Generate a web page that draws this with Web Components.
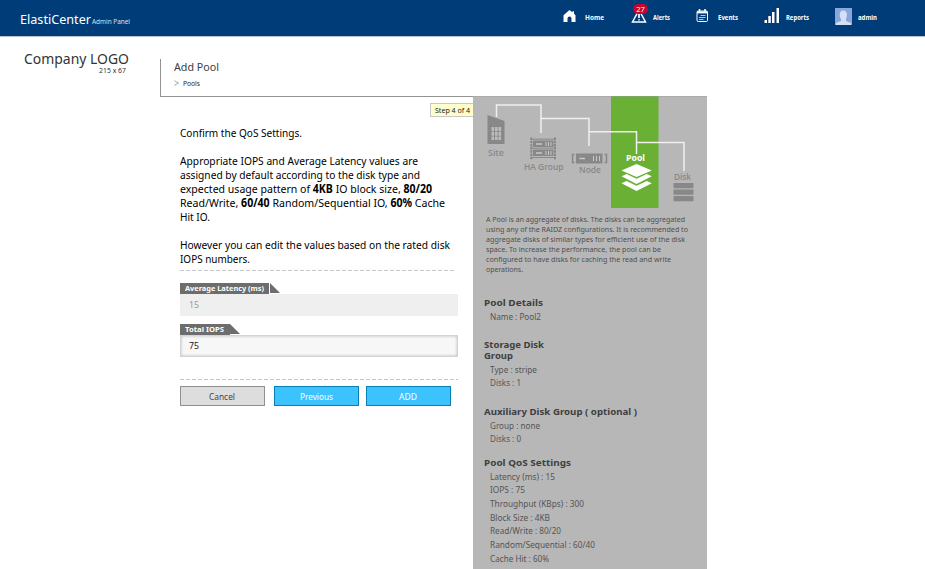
<!DOCTYPE html>
<html lang="en">
<head>
<meta charset="utf-8">
<title>ElastiCenter Admin Panel</title>
<style>
html,body{margin:0;height:569px;overflow:hidden;background:#fff;font-family:"Noto Sans","Open Sans",sans-serif}
</style>
</head>
<body>
<admin-page></admin-page>
<script>
// One line of text, condensed or widened to the width given in "w".
class TextLine extends HTMLElement{
  connectedCallback(){
    if(!this.shadowRoot){
      this.attachShadow({mode:'open'}).innerHTML=`<style>:host{display:block;white-space:nowrap;flex:none}span{display:inline-block;transform-origin:0 50%;vertical-align:top}</style><span><slot></slot></span>`;
    }
    const w=+this.getAttribute('w'), s=this.shadowRoot.querySelector('span');
    this.style.width=w+'px';
    const n=s.offsetWidth?s.getBoundingClientRect().width:0;
    if(n)s.style.transform=`scaleX(${w/n})`;
  }
}

class NavItem extends HTMLElement{
  connectedCallback(){
    this.attachShadow({mode:'open'}).innerHTML=`<style>
    :host{display:flex;align-items:center;height:34px;color:#fff;position:relative;font:bold 7px/10px "Noto Sans",sans-serif}
    ::slotted(svg){display:block;flex:none}
    ::slotted(text-line){margin-top:2px}
    b{position:absolute;left:2px;top:4px;width:15px;height:10px;border-radius:5px;background:#c4062c;font:7.5px/10px "Noto Sans",sans-serif;text-align:center}
    </style><slot></slot>${this.hasAttribute('badge')?`<b>${this.getAttribute('badge')}</b>`:''}`;
  }
}

class TopBar extends HTMLElement{
  connectedCallback(){
    this.attachShadow({mode:'open'}).innerHTML=`<style>
    :host{display:flex;box-sizing:border-box;height:37px;background:#003c78;border-bottom:1px solid #b5bfca;color:#fff;position:relative}
    .brand{display:flex;width:543px;padding-left:20px;box-sizing:border-box}
    .a{font-size:13px;line-height:18px;margin-top:10px}
    .b{font-size:7.2px;line-height:10px;margin:16px 0 0 1px;color:#d8e2ee}
    nav{display:flex;padding-left:20px}
    svg{display:block}
    </style>
    <div class="brand"><text-line class="a" w="71">ElastiCenter</text-line><text-line class="b" w="38">Admin Panel</text-line></div>
    <nav>
      <nav-item style="width:68px"><svg width="13" height="12" style="margin-right:9px;margin-top:-3px" fill="#fff"><path d="M6.5 0 9.500 2.500V1.200H11V3.800L12.500 5.300V12H8.500V8.500Q8.500 6.500 6.500 6.500T4.500 8.500V12H.500V5.300Z"/></svg><text-line w="19">Home</text-line></nav-item>
      <nav-item badge="27" style="width:64px"><svg width="16" height="15" style="margin-right:6px;margin-top:-4px" fill="none" stroke="#fff" stroke-width="1.500"><path d="M8 2 14.500 14h-13Z"/><path d="M8 6v4M8 11.300v1.200" stroke-width="1.700"/></svg><text-line w="17">Alerts</text-line></nav-item>
      <nav-item style="width:69px"><svg width="13" height="13" style="margin:-4px 9px 0 1px" fill="none" stroke="#fff"><rect x="1" y="2" width="10.500" height="10.500" rx="1.200"/><path d="M1 3.400h10.500" stroke-width="2"/><path d="M3.500 0v4M9 0v4" stroke-width="1.500"/><path d="M4.500 6.500h5M3 8.500h6.500M3 10.500h4.500" stroke="#b4c7dc"/></svg><text-line w="20">Events</text-line></nav-item>
      <nav-item style="width:71px"><svg width="16" height="15" style="margin-right:6px;margin-top:-3px" fill="#fff"><path d="M.500 12H3v3H.500zM4.300 8h2.500v7H4.300zM8 4h2.500v11H8zM12.500 0H15v15h-2.500z"/></svg><text-line w="23">Reports</text-line></nav-item>
      <nav-item><svg width="17" height="17" style="margin-right:6px;margin-top:-2px"><path fill="#8ba6dd" d="M0 0h17v17H0z"/><g fill="#d3dff5"><ellipse cx="8.300" cy="7" rx="3.600" ry="4.500"/><path d="M6 10h5v3l5 2v2H1v-2l5-2z"/></g></svg><text-line w="19">admin</text-line></nav-item>
    </nav>`;
  }
}

class CompanyLogo extends HTMLElement{
  connectedCallback(){
    this.attachShadow({mode:'open'}).innerHTML=`<style>
    :host{display:flex;flex-direction:column;width:160px;flex:none;padding:12px 0 0 24px;box-sizing:border-box;color:#333}
    .n{font-size:14.3px;line-height:20px}.s{font-size:7px;line-height:9px;margin:-3px 0 0 75px}
    </style><text-line class="n" w="105">Company LOGO</text-line><text-line class="s" w="27">215 x 67</text-line>`;
  }
}

class PageTitle extends HTMLElement{
  connectedCallback(){
    this.attachShadow({mode:'open'}).innerHTML=`<style>
    :host{display:block;box-sizing:border-box;height:38px;margin-top:22px;width:547px;border-left:1px solid #939393;border-bottom:1px solid #939393;padding-left:13px}
    .t{font-size:11.3px;line-height:16px;color:#3c3c3c}
    div{display:flex;align-items:center;gap:4px;font-size:6.8px;line-height:16px;color:#222;padding-top:1px}
    svg{display:block;margin-top:-2px}
    </style><text-line class="t" w="45">Add Pool</text-line><div><svg width="5" height="6" fill="none" stroke="#aaa"><path d="M.3.7 4.500 3 .3 5.300"/></svg><text-line w="17">Pools</text-line></div>`;
  }
}

class FormField extends HTMLElement{
  connectedCallback(){
    const off=this.hasAttribute('disabled');
    this.attachShadow({mode:'open'}).innerHTML=`<style>
    :host{display:block;width:278px;margin-bottom:${off?8:0}px}
    .l{display:flex;height:11px}
    .tab{background:#6d6d6d;color:#fff;font:bold 7px/11px "Noto Sans",sans-serif;padding-left:5px;box-sizing:border-box}
    svg{display:block;margin-left:${off?1:0}px}
    .v{box-sizing:border-box;height:22px;padding-left:${off?9:7}px;font-size:9.8px;line-height:${off?22:18}px;
      ${off?'background:#efefef;color:#999':'background:#f7f7f7;color:#222;border:1px solid #d5d3d3;box-shadow:inset 0 0 3px #bbb5b5;padding:1px 0 0 8px'}}
    </style><div class="l"><div class="tab" style="width:${this.getAttribute('tab')}px"><text-line w="${this.getAttribute('w')}">${this.getAttribute('label')}</text-line></div><svg width="10" height="10"><path d="M0 0 10 10H0z" fill="#6d6d6d"/></svg></div>
    <div class="v"><text-line w="10">${this.getAttribute('value')}</text-line></div>`;
  }
}

class PushButton extends HTMLElement{
  connectedCallback(){
    this.attachShadow({mode:'open'}).innerHTML=`<style>
    :host{display:flex;justify-content:center;box-sizing:border-box;width:85px;height:20px;border:1px solid #087fb5;background:#3cc2fd;color:#fff;font-size:9.5px;line-height:19px;padding-right:1px}
    :host([plain]){border-color:#8f8f8f;background:#ddd;color:#444}
    </style><slot></slot>`;
  }
}

class QosForm extends HTMLElement{
  connectedCallback(){
    this.attachShadow({mode:'open'}).innerHTML=`<style>
    :host{display:block;width:313px;box-sizing:border-box;padding:7px 0 0 20px;font-size:11.6px;line-height:14px;color:#000}
    .step{box-sizing:border-box;width:43px;height:14px;margin-left:250px;border:1px solid #c8c8c0;border-right:0;background:#ffc;font-size:6.8px;line-height:13px;padding-left:4px;color:#222;margin-bottom:9px}
    p{margin:0 0 14px}p.last{margin:0}
    .dash{height:1px;width:275px;background:repeating-linear-gradient(90deg,#c6c6c6 0 4px,transparent 4px 6px)}
    .buttons{display:flex;padding-top:6px;gap:9px}
    .buttons push-button:last-child{margin-left:-2px}
    </style>
    <div class="step"><text-line w="35">Step 4 of 4</text-line></div>
    <p><text-line w="122">Confirm the QoS Settings.</text-line></p>
    <p><text-line w="238">Appropriate IOPS and Average Latency values are</text-line>
    <text-line w="240">assigned by default according to the disk type and</text-line>
    <text-line w="252">expected usage pattern of <b>4KB</b> IO block size, <b>80/20</b></text-line>
    <text-line w="265">Read/Write, <b>60/40</b> Random/Sequential IO, <b>60%</b> Cache</text-line>
    <text-line w="30">Hit IO.</text-line></p>
    <p class="last"><text-line w="270">However you can edit the values based on the rated disk</text-line>
    <text-line w="70">IOPS numbers.</text-line></p>
    <div class="dash" style="margin:4px 0 12px"></div>
    <form-field label="Average Latency (ms)" value="15" tab="89" w="79" disabled></form-field>
    <form-field label="Total IOPS" value="75" tab="50" w="39"></form-field>
    <div class="dash" style="margin-top:22px;width:278px"></div>
    <div class="buttons"><push-button plain><text-line w="26">Cancel</text-line></push-button><push-button><text-line w="33">Previous</text-line></push-button><push-button><text-line w="18">ADD</text-line></push-button></div>`;
  }
}

class TopologyMap extends HTMLElement{
  connectedCallback(){
    this.attachShadow({mode:'open'}).innerHTML=`<style>:host{display:block;height:112px}svg{display:block}text{font:600 8.200px "Open Sans","Noto Sans",sans-serif;fill:#888}</style>
    <svg width="234" height="112">
    <path fill="#69b034" d="M138 0h47.500v112H138z"/>
    <path fill="#9d9d9d" d="M0 0h234v1H0z" opacity=".45"/>
    <g fill="none" stroke="#f0f0f0" stroke-width="1.500">
      <path d="M23.500 21V9H68V37M68 22.500H116V50M116 35.700H163.500V58M163.500 46.500H211V75"/></g>
    <g fill="#888"><path d="M14.500 19 31.500 25V48H14.500z"/>
      <path d="M60 44.500h20.500v6.500H60zM60 53.500h20.500v6.500H60z"/>
      <path d="M103 57.500h26.500v10H103z"/>
      <rect x="200.500" y="87" width="20" height="5.200" rx=".8"/><rect x="200.500" y="93.500" width="20" height="5.200" rx=".8"/><rect x="200.500" y="100" width="20" height="5.200" rx=".8"/></g>
    <path fill="#bcbcbc" d="M18.500 31h2.600v4h-2.600zM22 31h2.600v4H22zM25.500 31h2.600v4h-2.600zM18.500 35.800h2.600v4h-2.600zM22 35.800h2.600v4H22zM25.500 35.800h2.600v4h-2.600zM18.500 40.500h2.600V44h-2.600zM22 40.500h2.600V44H22zM25.500 40.500h2.600V44h-2.600z"/>
    <g fill="none" stroke="#888"><path d="M58.300 41.500V63.500M82 41.500V63.500" stroke-width="2" stroke-dasharray="2.500 .7"/><path d="M58 43.200h24M58 52.200h24M58 61.500h24" stroke-width="1"/>
      <path d="M101.500 58.500H99.500v8h2M131.500 58.500h2v8h-2" stroke-width="1.500"/></g>
    <g stroke="#c8c8c8" fill="none"><path d="M63 48h6M63 57h6M106.500 62.500h5.500" stroke-width="1.300"/><path d="M73 46v4M75.500 46v4M78 46v4M73 55v4M75.500 55v4M78 55v4M120.500 60v5M123.500 60v5M126.500 60v5"/></g>
    <g fill="#fff"><path d="M163.500 68 178.800 74.500 163.500 81 148.500 74.500z"/><path d="M148.500 80.200 153.500 78 163.500 82.700 173.800 78 178.800 80.200 163.500 88zM148.500 87.200 153.500 85 163.500 89.700 173.800 85 178.800 87.200 163.500 95z"/></g>
    <text x="15" y="59.500" textLength="16" lengthAdjust="spacingAndGlyphs">Site</text><text x="51" y="73.500" textLength="39.500" lengthAdjust="spacingAndGlyphs">HA Group</text><text x="106" y="76.700" textLength="22" lengthAdjust="spacingAndGlyphs">Node</text><text x="153" y="65" textLength="19" lengthAdjust="spacingAndGlyphs" style="fill:#fff;font-weight:700">Pool</text><text x="201" y="83.700" textLength="17" lengthAdjust="spacingAndGlyphs">Disk</text>
    </svg>`;
  }
}

class DetailGroup extends HTMLElement{
  connectedCallback(){
    this.attachShadow({mode:'open'}).innerHTML=`<style>
    :host{display:block;color:#555;font-size:9.300px;line-height:13.700px;padding-left:17px}
    ::slotted([slot=title]){color:#3f3f3f;font-weight:bold;font-size:9.300px;line-height:11px;margin-left:-6.500px}
    .h{margin-bottom:2px}
    </style><div class="h"><slot name="title"></slot></div><slot></slot>`;
  }
}

class PoolSummary extends HTMLElement{
  connectedCallback(){
    this.attachShadow({mode:'open'}).innerHTML=`<style>
    :host{display:block;width:234px;height:473px;background:#b7b7b7}
    .about{font-size:7.400px;line-height:10px;color:#4f4f4f;padding:6px 0 0 13px;height:76px}
    </style>
    <topology-map></topology-map>
    <div class="about"><text-line w="199">A Pool is an aggregate of disks. The disks can be aggregated</text-line><text-line w="202">using any of the RAIDZ configurations. It is recommended to</text-line><text-line w="199">aggregate disks of similar types for efficient use of the disk</text-line><text-line w="175">space. To increase the performance, the pool can be</text-line><text-line w="185">configured to have disks for caching the read and write</text-line><text-line w="37">operations.</text-line></div>
    <detail-group style="margin-top:7px"><text-line slot="title" w="59">Pool Details</text-line><text-line w="51">Name : Pool2</text-line></detail-group>
    <detail-group style="margin-top:15px"><text-line slot="title" w="60">Storage Disk</text-line><text-line slot="title" w="29">Group</text-line><text-line w="47">Type : stripe</text-line><text-line w="31">Disks : 1</text-line></detail-group>
    <detail-group style="margin-top:15.500px"><text-line slot="title" w="153">Auxiliary Disk Group ( optional )</text-line><text-line w="50">Group : none</text-line><text-line w="31">Disks : 0</text-line></detail-group>
    <detail-group style="margin-top:10.500px"><text-line slot="title" w="87">Pool QoS Settings</text-line><text-line w="65">Latency (ms) : 15</text-line><text-line w="35">IOPS : 75</text-line><text-line w="94">Throughput (KBps) : 300</text-line><text-line w="60">Block Size : 4KB</text-line><text-line w="71">Read/Write : 80/20</text-line><text-line w="105">Random/Sequential : 60/40</text-line><text-line w="59">Cache Hit : 60%</text-line></detail-group>`;
  }
}

class AdminPage extends HTMLElement{
  connectedCallback(){
    this.attachShadow({mode:'open'}).innerHTML=`<style>
    :host{display:block;width:925px;height:569px;overflow:hidden;background:#fff}
    .body{display:flex}.cols{display:flex;margin-top:-1px}
    </style><top-bar></top-bar><div class="body"><company-logo></company-logo><main><page-title></page-title><div class="cols"><qos-form></qos-form><pool-summary></pool-summary></div></main></div>`;
  }
}
const parts={'text-line':TextLine,'nav-item':NavItem,'top-bar':TopBar,'company-logo':CompanyLogo,'page-title':PageTitle,'form-field':FormField,'push-button':PushButton,'qos-form':QosForm,'topology-map':TopologyMap,'detail-group':DetailGroup,'pool-summary':PoolSummary,'admin-page':AdminPage};
for(const [name,cls] of Object.entries(parts))customElements.define(name,cls);
</script>
</body>
</html>
